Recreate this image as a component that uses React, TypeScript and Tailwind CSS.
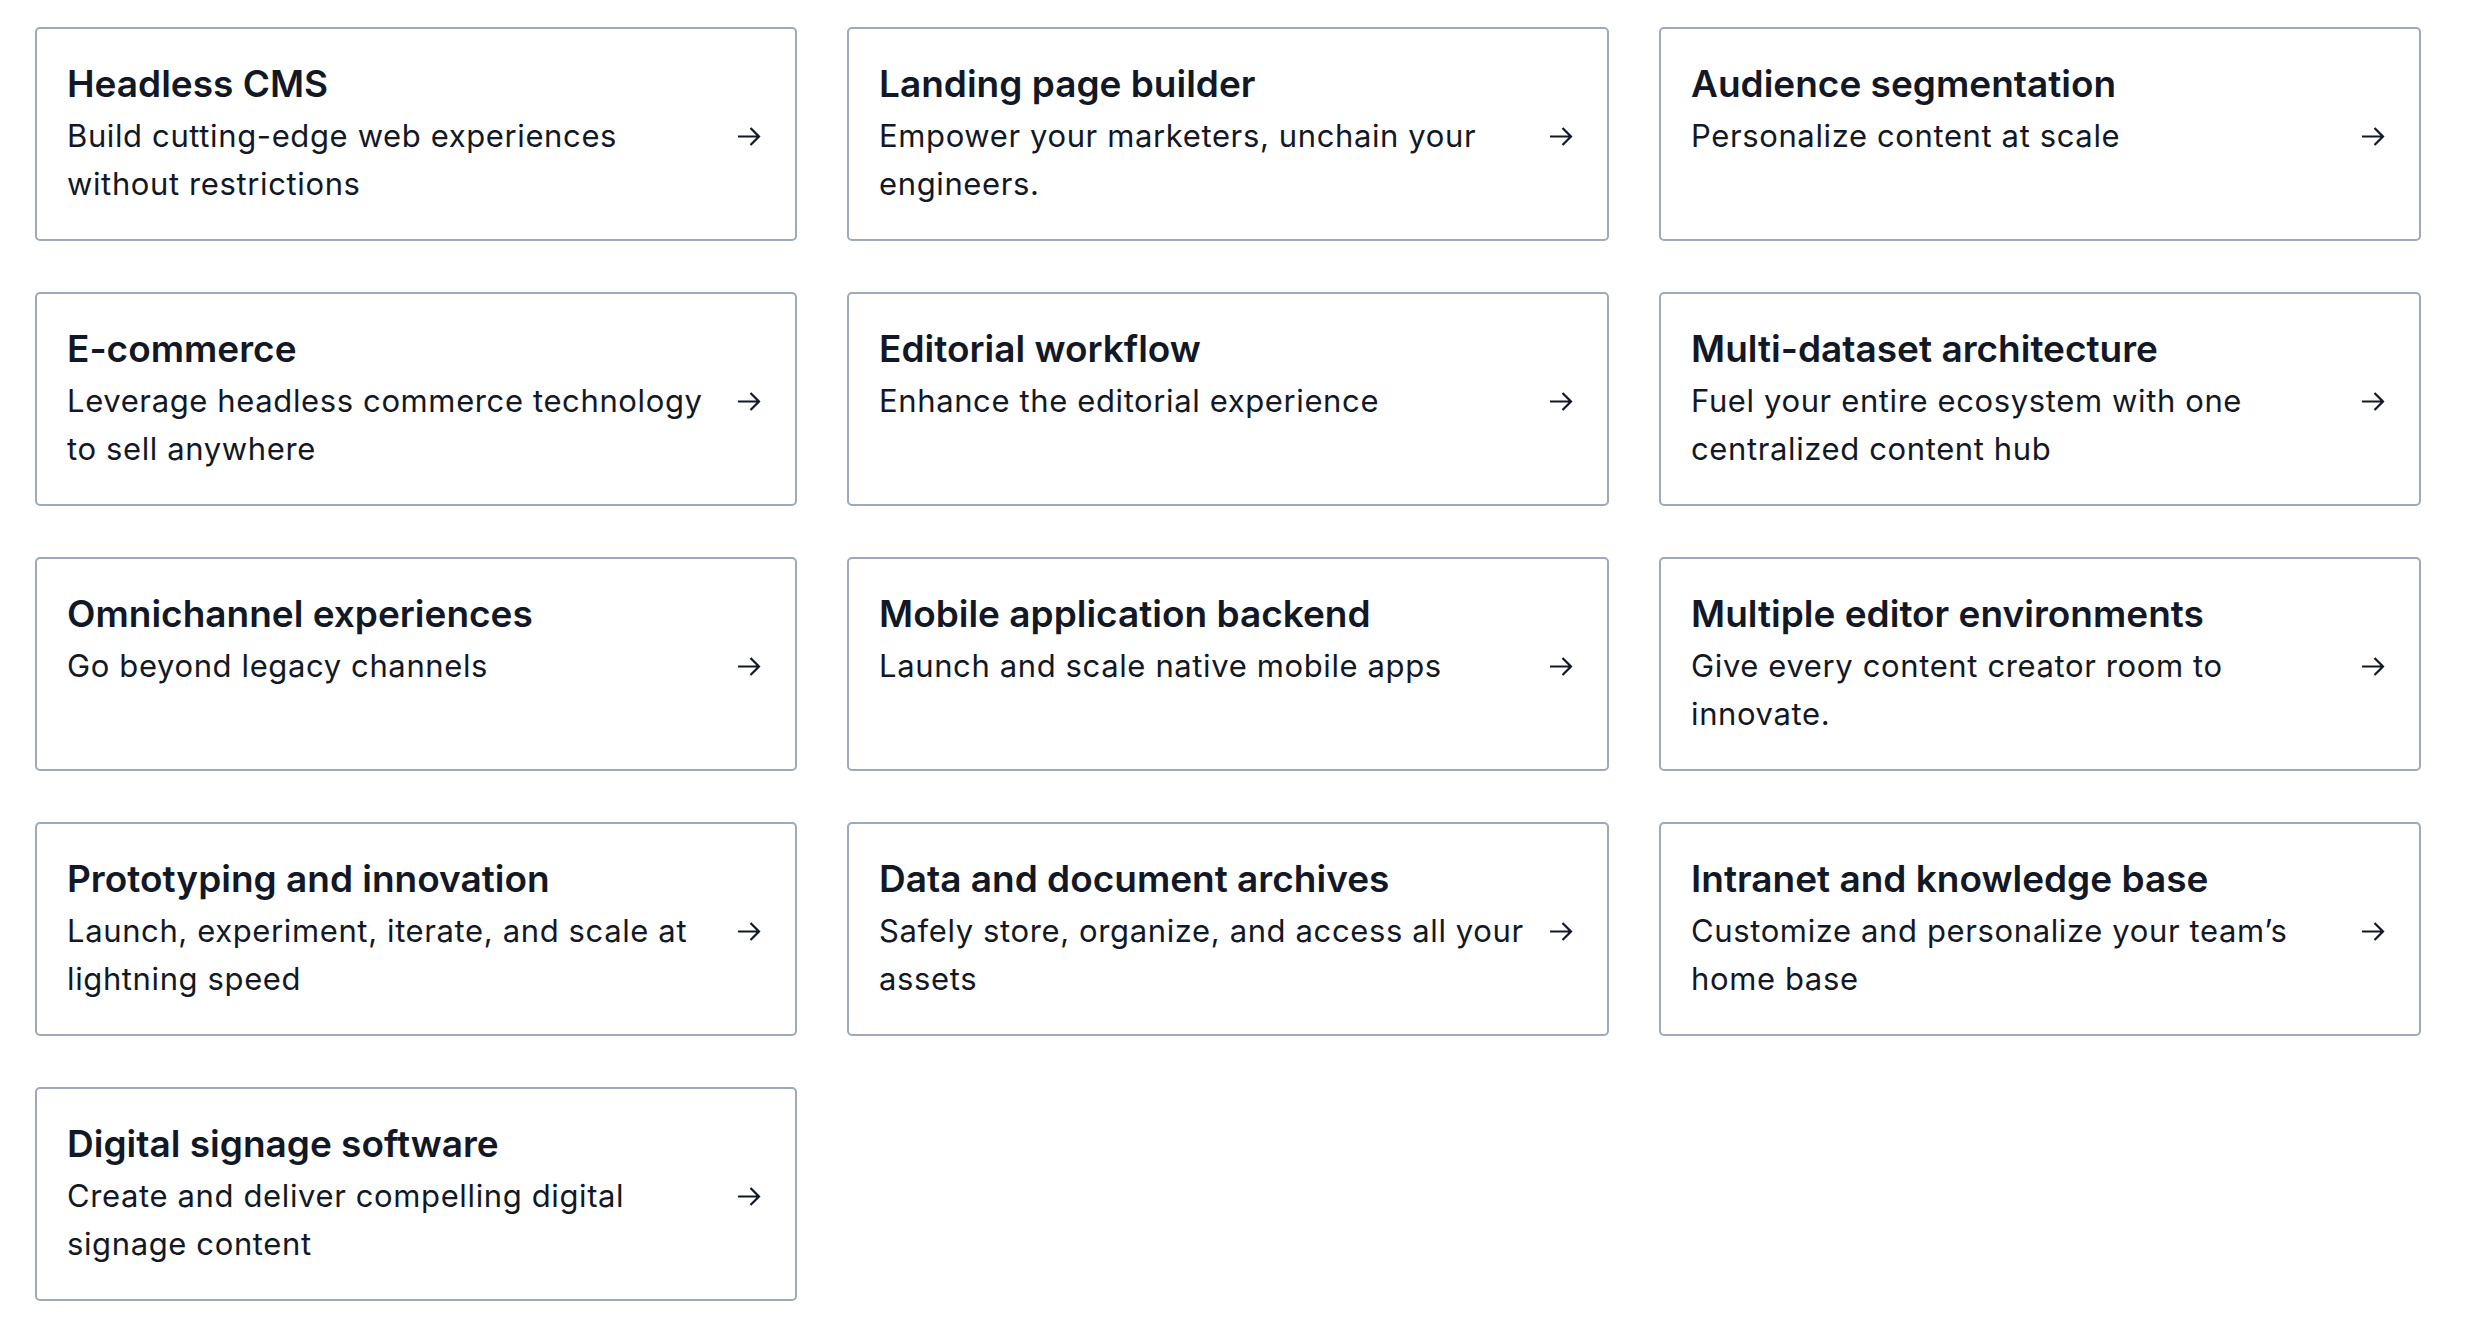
import React from "react";

const solutions = [
  { title: "Headless CMS", text: "Build cutting-edge web experiences without restrictions" },
  { title: "Landing page builder", text: "Empower your marketers, unchain your engineers." },
  { title: "Audience segmentation", text: "Personalize content at scale" },
  { title: "E-commerce", text: "Leverage headless commerce technology to sell anywhere" },
  { title: "Editorial workflow", text: "Enhance the editorial experience" },
  { title: "Multi-dataset architecture", text: "Fuel your entire ecosystem with one centralized content hub" },
  { title: "Omnichannel experiences", text: "Go beyond legacy channels" },
  { title: "Mobile application backend", text: "Launch and scale native mobile apps" },
  { title: "Multiple editor environments", text: "Give every content creator room to innovate." },
  { title: "Prototyping and innovation", text: "Launch, experiment, iterate, and scale at lightning speed" },
  { title: "Data and document archives", text: "Safely store, organize, and access all your assets" },
  { title: "Intranet and knowledge base", text: "Customize and personalize your team’s home base" },
  { title: "Digital signage software", text: "Create and deliver compelling digital signage content" },
];

function Arrow() {
  return (
    <svg width="24" height="21" viewBox="0 0 24 21" fill="none" className="mt-[3px] shrink-0">
      <path d="M1 10.5h21M13.5 2l8.5 8.5-8.5 8.5" stroke="#111827" strokeWidth="2.2" />
    </svg>
  );
}

export default function App() {
  return (
    <div className="min-h-[1318px] bg-white pl-[35px] pt-[27px]" style={{ fontFamily: "Inter, 'Noto Sans', sans-serif" }}>
      <div className="grid grid-cols-[repeat(3,762px)] gap-x-[50px] gap-y-[51px]">
        {solutions.map((s) => (
          <a
            key={s.title}
            href="#"
            className="flex h-[214px] items-center justify-between gap-5 rounded-[5px] border-2 border-[#9ea9bb] pb-8 pl-[30px] pr-[34px] pt-[33px] text-[#121826]"
          >
            <div className="self-start">
              <h3 className="text-[37px] font-semibold leading-[1.2]">{s.title}</h3>
              <p className="mt-[6px] text-[31px] leading-[48px] tracking-[0.02em]">{s.text}</p>
            </div>
            <Arrow />
          </a>
        ))}
      </div>
    </div>
  );
}
